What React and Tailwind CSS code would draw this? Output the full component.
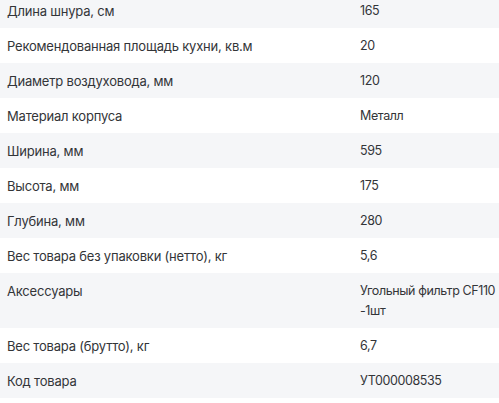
import React from 'react';

const specs = [
  ['Длина шнура, см', '165'],
  ['Рекомендованная площадь кухни, кв.м', '20'],
  ['Диаметр воздуховода, мм', '120'],
  ['Материал корпуса', 'Металл'],
  ['Ширина, мм', '595'],
  ['Высота, мм', '175'],
  ['Глубина, мм', '280'],
  ['Вес товара без упаковки (нетто), кг', '5,6'],
  ['Аксессуары', 'Угольный фильтр CF110 -1шт'],
  ['Вес товара (брутто), кг', '6,7'],
  ['Код товара', 'УТ000008535'],
];

export default function App() {
  return (
    <div className="w-[499px] h-[403px] overflow-hidden bg-white">
      <div className="-mt-[7px] font-['Inter',sans-serif] text-[13px] tracking-[-0.2px] leading-5 text-[#333538]">
        {specs.map(([label, value], i) => (
          <div
            key={label}
            className={`grid grid-cols-[353px_1fr] ${i % 2 === 0 ? 'bg-[#f5f6f8]' : 'bg-white'}`}
          >
            <div className="px-[7px] py-[7.5px]">{label}</div>
            <div className="pl-[7px] py-[7.5px] text-[12.5px] tracking-[-0.4px]">{value}</div>
          </div>
        ))}
      </div>
    </div>
  );
}
